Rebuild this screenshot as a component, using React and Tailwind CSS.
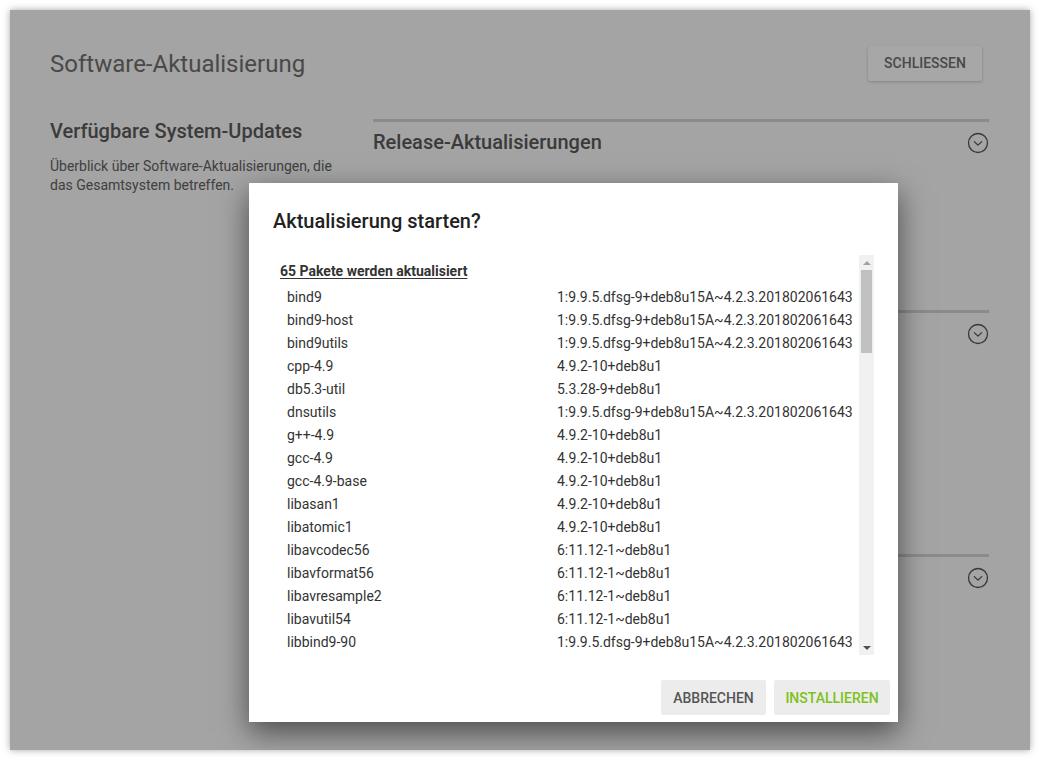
import React from "react";

const rows = [
  ["bind9", "1:9.9.5.dfsg-9+deb8u15A~4.2.3.201802061643"],
  ["bind9-host", "1:9.9.5.dfsg-9+deb8u15A~4.2.3.201802061643"],
  ["bind9utils", "1:9.9.5.dfsg-9+deb8u15A~4.2.3.201802061643"],
  ["cpp-4.9", "4.9.2-10+deb8u1"],
  ["db5.3-util", "5.3.28-9+deb8u1"],
  ["dnsutils", "1:9.9.5.dfsg-9+deb8u15A~4.2.3.201802061643"],
  ["g++-4.9", "4.9.2-10+deb8u1"],
  ["gcc-4.9", "4.9.2-10+deb8u1"],
  ["gcc-4.9-base", "4.9.2-10+deb8u1"],
  ["libasan1", "4.9.2-10+deb8u1"],
  ["libatomic1", "4.9.2-10+deb8u1"],
  ["libavcodec56", "6:11.12-1~deb8u1"],
  ["libavformat56", "6:11.12-1~deb8u1"],
  ["libavresample2", "6:11.12-1~deb8u1"],
  ["libavutil54", "6:11.12-1~deb8u1"],
  ["libbind9-90", "1:9.9.5.dfsg-9+deb8u15A~4.2.3.201802061643"],
];

function Chevron() {
  return (
    <svg width="22" height="22" viewBox="0 0 22 22" fill="none">
      <circle cx="11" cy="11" r="9.5" stroke="#555" strokeWidth="1.3" />
      <path d="M7.3 9.6 L11 13.1 L14.7 9.6" stroke="#555" strokeWidth="1.3" strokeLinecap="round" strokeLinejoin="round" />
    </svg>
  );
}

function Section({ title, h }) {
  return (
    <div className={`border-t-[3px] border-[#d4d4d4] ${h}`}>
      <div className="flex items-center justify-between pt-[6px] h-[34px]">
        <div className="text-[20px] leading-[28px] font-medium text-[#5a5a5a]">{title}</div>
        <div className="mt-[2px]"><Chevron /></div>
      </div>
    </div>
  );
}

export default function App() {
  return (
    <div className="w-[1040px] h-[761px] bg-white p-[10px]" style={{ fontFamily: "Roboto, 'Liberation Sans', sans-serif" }}>
      <div className="relative w-[1020px] h-[740px] bg-[#fafafa] shadow-[0_0_7px_rgba(0,0,0,0.35)] overflow-hidden">
        {/* page content */}
        <div className="pl-[40px] pr-[41px] pt-[36px]">
          <div className="flex items-start justify-between">
            <div className="text-[24px] leading-[34px] text-[#707070] pt-[1px]">Software-Aktualisierung</div>
            <button className="mr-[7px] h-[35px] w-[114px] bg-white rounded-[2px] shadow-[0_1px_3px_rgba(0,0,0,0.2)] text-[14px] font-medium text-[#707070]">SCHLIESSEN</button>
          </div>
          <div className="flex gap-[33px] mt-[38px]">
            <div className="w-[290px] shrink-0">
              <div className="text-[20px] leading-[28px] font-medium text-[#5a5a5a] -mt-[2px]">Verfügbare System-Updates</div>
              <div className="mt-[12px] text-[14px] leading-[19px] text-[#626262]">
                Überblick über Software-Aktualisierungen, die das Gesamtsystem betreffen.
              </div>
            </div>
            <div className="flex-1">
              <Section title="Release-Aktualisierungen" h="h-[191px]" />
              <Section title="" h="h-[244px]" />
              <Section title="" h="h-[160px]" />
            </div>
          </div>
        </div>

        {/* overlay */}
        <div className="absolute inset-0 bg-black/[0.345]" />

        {/* dialog */}
        <div className="absolute left-[239px] top-[173px] w-[649px] h-[539px] bg-white shadow-[0_10px_28px_rgba(0,0,0,0.55)] flex flex-col">
          <div className="px-[24px] pt-[24px] text-[20px] leading-[28px] font-medium text-[#222]">Aktualisierung starten?</div>
          <div className="mx-[24px] mt-[20px] h-[400px] flex overflow-hidden">
            <div className="flex-1 overflow-hidden pl-[7px] pt-[8px]">
              <div className="text-[14px] leading-[16px] font-bold text-[#333] underline underline-offset-[2px] decoration-1">65 Pakete werden aktualisiert</div>
              <div className="mt-[7px] pl-[7px]">
                {rows.map(([n, v]) => (
                  <div key={n} className="flex h-[23px] items-center text-[14px] text-[#333]">
                    <div className="w-[270px] shrink-0">{n}</div>
                    <div>{v}</div>
                  </div>
                ))}
              </div>
            </div>
            <div className="w-[15px] shrink-0 bg-[#f1f1f1] flex flex-col items-center">
              <div className="h-[15px] flex items-center justify-center">
                <div className="w-0 h-0 border-l-[4px] border-r-[4px] border-b-[4px] border-l-transparent border-r-transparent border-b-[#a3a3a3]" />
              </div>
              <div className="w-[11px] h-[83px] bg-[#c1c1c1]" />
              <div className="flex-1" />
              <div className="h-[15px] flex items-center justify-center">
                <div className="w-0 h-0 border-l-[4px] border-r-[4px] border-t-[4px] border-l-transparent border-r-transparent border-t-[#505050]" />
              </div>
            </div>
          </div>
          <div className="flex justify-end gap-[8px] pr-[8px] mt-[25px]">
            <button className="h-[35px] w-[105px] bg-[#ececec] rounded-[2px] text-[14px] font-medium text-[#555] pt-[2px]">ABBRECHEN</button>
            <button className="h-[35px] w-[116px] bg-[#ececec] rounded-[2px] text-[14px] font-medium text-[#7cc21a] pt-[2px]">INSTALLIEREN</button>
          </div>
        </div>
      </div>
    </div>
  );
}
